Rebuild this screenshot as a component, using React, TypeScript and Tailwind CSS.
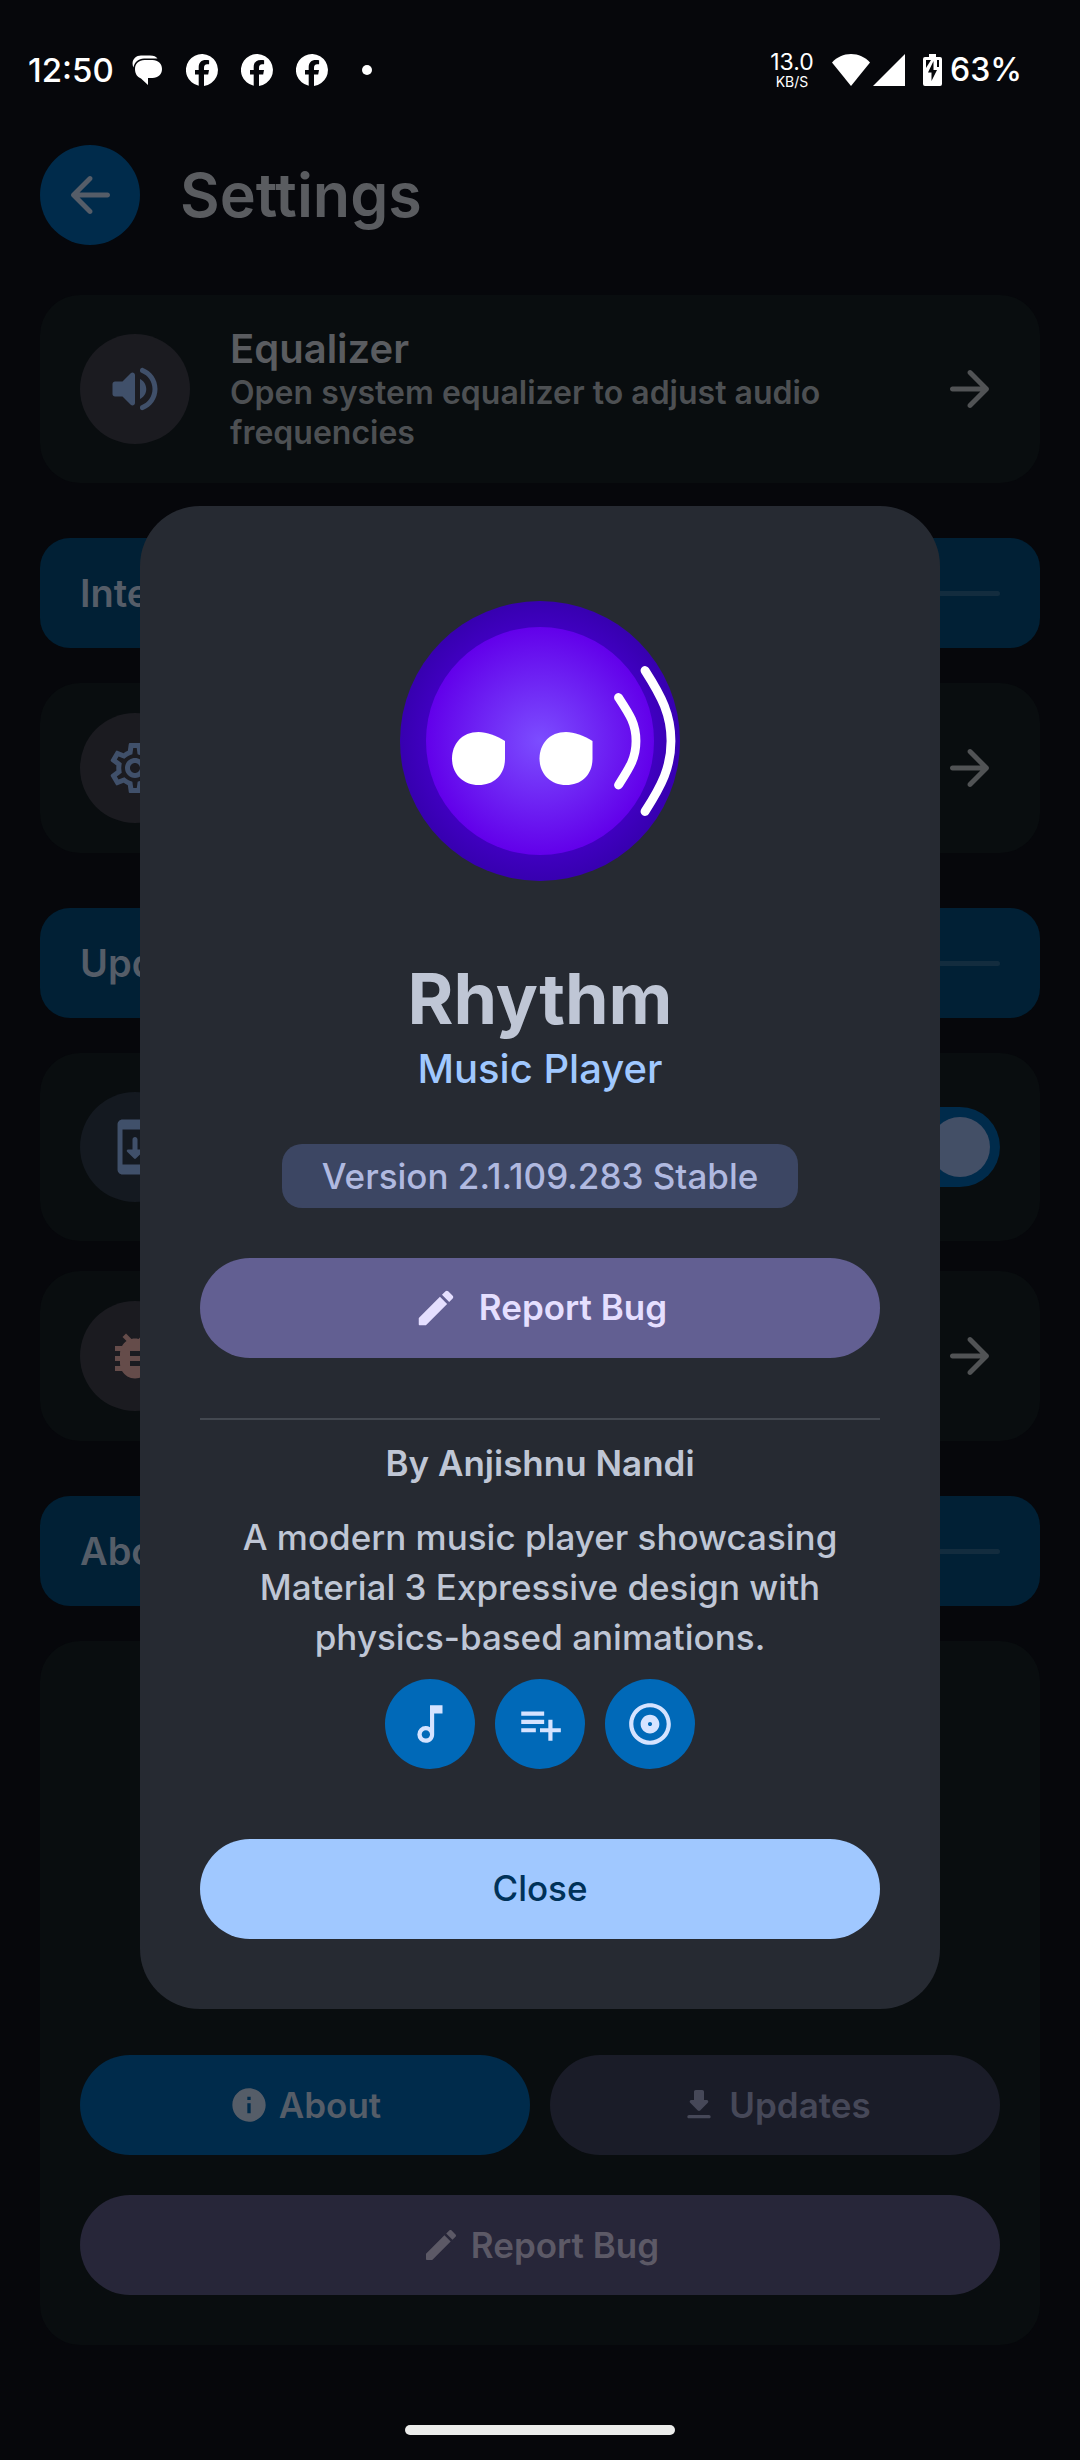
import type { ReactNode } from "react";
import {
  MdBugReport,
  MdInfo,
  MdOutlineAlbum,
  MdOutlineMusicNote,
  MdOutlineSettings,
  MdPlaylistAdd,
} from "react-icons/md";

const PATHS = {
  back: "M19 11H7.83l4.88-4.88c.39-.39.39-1.03 0-1.42-.39-.39-1.02-.39-1.41 0l-6.59 6.59c-.39.39-.39 1.02 0 1.41l6.59 6.59c.39.39 1.02.39 1.41 0 .39-.39.39-1.02 0-1.41L7.83 13H19c.55 0 1-.45 1-1s-.45-1-1-1z",
  forward:
    "M5 13h11.17l-4.88 4.88c-.39.39-.39 1.03 0 1.42.39.39 1.02.39 1.41 0l6.59-6.59c.39-.39.39-1.02 0-1.41l-6.58-6.6c-.39-.39-1.02-.39-1.41 0-.39.39-.39 1.02 0 1.41L16.17 11H5c-.55 0-1 .45-1 1s.45 1 1 1z",
  volume:
    "M3 10v4c0 .55.45 1 1 1h3l3.29 3.29c.63.63 1.71.18 1.71-.71V6.41c0-.89-1.08-1.34-1.71-.71L7 9H4c-.55 0-1 .45-1 1zm13.5 2c0-1.77-1.02-3.29-2.5-4.03v8.05c1.48-.73 2.5-2.25 2.5-4.02zM14 4.45v.2c0 .38.25.71.6.85C17.18 6.53 19 9.06 19 12s-1.82 5.47-4.4 6.5c-.36.14-.6.47-.6.85v.2c0 .63.63 1.07 1.21.85C18.6 19.11 21 15.84 21 12s-2.4-7.11-5.79-8.4c-.58-.23-1.21.22-1.21.85z",
  update:
    "M17 1.01L7 1c-1.1 0-1.99.9-1.99 2v18c0 1.1.89 2 1.99 2h10c1.1 0 2-.9 2-2V3c0-1.1-.9-1.99-2-1.99zM17 19H7V5h10v14zM11 9v4H9.2c-.45 0-.67.54-.35.85l2.79 2.79c.2.2.51.2.71 0l2.79-2.79c.31-.31.09-.85-.36-.85H13V9c0-.55-.45-1-1-1s-1 .45-1 1z",
  download:
    "M16.59 9H15V4c0-.55-.45-1-1-1h-4c-.55 0-1 .45-1 1v5H7.41c-.89 0-1.34 1.08-.71 1.71l4.59 4.59c.39.39 1.02.39 1.41 0l4.59-4.59c.63-.63.19-1.71-.7-1.71zM5 19c0 .55.45 1 1 1h12c.55 0 1-.45 1-1s-.45-1-1-1H6c-.55 0-1 .45-1 1z",
  edit: "M3 17.46v3.04c0 .28.22.5.5.5h3.04c.13 0 .26-.05.35-.15L17.81 9.94l-3.75-3.75L3.15 17.1c-.1.1-.15.22-.15.36zM20.71 7.04c.39-.39.39-1.02 0-1.41l-2.34-2.34c-.39-.39-1.02-.39-1.41 0l-1.83 1.83 3.75 3.75 1.83-1.83z",
};

function Glyph({ name, className }: { name: keyof typeof PATHS; className: string }) {
  return (
    <svg viewBox="0 0 24 24" fill="currentColor" aria-hidden="true" className={className}>
      <path fillRule="evenodd" d={PATHS[name]} />
    </svg>
  );
}

function FacebookMark() {
  return (
    <svg viewBox="0 0 32 32" className="size-8" aria-hidden="true">
      <path
        fill="#fff"
        d="M12.700 31.700A16 16 0 1 1 18 31.900V20.600h4.200l.8-4.500h-5v-2.200c0-2.400 1-3.600 3.200-3.600h1.900V6.200c-.8-.2-2-.3-3.200-.3-4.700 0-7.200 2.600-7.200 7.300v2.900H9v4.500h3.700z"
      />
    </svg>
  );
}

function StatusBar() {
  return (
    <div className="flex h-[140px] items-center justify-between pl-7 pr-[58px] text-white">
      <div className="flex items-center">
        <span className="w-[104px] text-[33px] font-medium leading-10">12:50</span>
        <svg viewBox="0 0 30 30" className="size-[30px]" aria-hidden="true">
          <path fill="#fff" d="M1.500 12.500C-1.500 6 3 .5 9 .5h9c4 0 6 1 7.500 3H12C6.500 3.500 2.500 7 1.500 12.500z" />
          <path fill="#fff" d="M12.500 5h8C26 5 30 8.500 30 14s-4 9-9.500 9H16v7l-7-6.500C5 22 3 18.500 3 14c0-5.500 4-9 9.500-9z" />
        </svg>
        <div className="ml-6 flex gap-[23px]">
          <FacebookMark />
          <FacebookMark />
          <FacebookMark />
        </div>
        <span className="ml-[34px] size-2.5 rounded-full bg-white" />
      </div>
      <div className="flex items-center">
        <div className="flex w-11 flex-col items-center">
          <span className="text-[23px] leading-6">13.0</span>
          <span className="text-[14px] leading-4">KB/S</span>
        </div>
        <svg viewBox="0 0 38 32" className="ml-[18px] h-8 w-[38px]" aria-hidden="true">
          <path fill="#fff" d="M19 0c7.500 0 14 3 19 8.500L19 32 0 8.500C5 3 11.500 0 19 0z" />
        </svg>
        <svg viewBox="0 0 32 32" className="ml-[3px] size-8" aria-hidden="true">
          <path fill="#fff" d="M32 0v32H0z" />
        </svg>
        <svg viewBox="0 0 19 32" className="ml-[18px] h-8 w-[19px]" aria-hidden="true">
          <path fill="#fff" d="M6 0h7v3h4a2 2 0 0 1 2 2v25a2 2 0 0 1-2 2H2a2 2 0 0 1-2-2V5a2 2 0 0 1 2-2h4z" />
          <path fill="#06070b" d="M3 6h5L3 14zM14 6h2v7h-2zM10.500 7v9H14L8.500 27v-8.500H5z" />
        </svg>
        <span className="ml-2 text-[32px] font-medium leading-10">63%</span>
      </div>
    </div>
  );
}

function SectionHeader({ title }: { title: string }) {
  return (
    <div className="mt-[55px] flex h-[110px] items-center gap-10 rounded-[30px] bg-[#012035] px-10">
      <h2 className="text-[38px] font-semibold text-[#555d68]">{title}</h2>
      <span className="h-[5px] flex-1 rounded-full bg-[#132c3e]" />
    </div>
  );
}

function IconCircle({ className, children }: { className: string; children: ReactNode }) {
  return (
    <span className={"flex size-[110px] shrink-0 items-center justify-center rounded-full " + className}>
      {children}
    </span>
  );
}

function Row({ className, children }: { className: string; children: ReactNode }) {
  return (
    <div className={"flex items-center justify-between rounded-[40px] bg-[#090d0f] px-10 py-[30px] " + className}>
      {children}
    </div>
  );
}

function ForwardButton({ label }: { label: string }) {
  return (
    <button type="button" aria-label={label} className="text-[#515355]">
      <Glyph name="forward" className="size-[60px]" />
    </button>
  );
}

function Logo() {
  return (
    <svg viewBox="0 0 280 280" className="size-[280px]" role="img" aria-label="Rhythm logo">
      <defs>
        <radialGradient id="logo-rim">
          <stop offset="0.8" stopColor="#4000c1" />
          <stop offset="1" stopColor="#3700b0" />
        </radialGradient>
        <radialGradient id="logo-face">
          <stop offset="0" stopColor="#7c4dff" />
          <stop offset="1" stopColor="#6200ea" />
        </radialGradient>
      </defs>
      <circle cx="140" cy="140" r="140" fill="url(#logo-rim)" />
      <circle cx="140" cy="140" r="114" fill="url(#logo-face)" />
      <g fill="#fff">
        <path d="M105 140V157.500C105 173 95 184 78.500 184S52 172 52 157.500 62 131 78.500 131C87 131 96 134.500 105 140Z" />
        <path d="M192.500 140V157.500C192.500 173 182.500 184 166 184S139.500 172 139.500 157.500 149.500 131 166 131C174.500 131 183.500 134.500 192.500 140Z" />
      </g>
      <g fill="none" stroke="#fff" strokeWidth="8.800" strokeLinecap="round">
        <path d="M218.500 96.500C230 114 236 123 236 140S230 166 218.500 184" />
        <path d="M245 69.500C262 96 271 114 271 140S262 184 245 210.500" />
      </g>
    </svg>
  );
}

function AboutDialog() {
  return (
    <div className="absolute inset-0 flex items-center justify-center px-[140px] pt-[54px]">
      <div
        role="dialog"
        aria-modal="true"
        aria-labelledby="about-title"
        className="flex w-full max-w-[800px] flex-col items-center rounded-[60px] bg-[#262a32] px-[60px] pb-[70px] pt-[95px] text-[#bfc6d5]"
      >
        <Logo />
        <h1 id="about-title" className="mt-[78px] text-[70px] font-bold leading-[80px]">
          Rhythm
        </h1>
        <p className="text-[40px] font-medium leading-[60px] text-[#a0c8ff]">Music Player</p>
        <p className="mt-[45px] rounded-[20px] bg-[#3c4663] px-10 text-[35px] font-medium leading-[64px] text-[#b0b9e0]">
          Version 2.1.109.283 Stable
        </p>
        <button
          type="button"
          className="mt-[50px] flex h-[100px] w-full items-center justify-center gap-5 rounded-full bg-[#625f92] text-[35px] font-semibold text-[#e5dfff]"
        >
          <Glyph name="edit" className="size-[46px]" />
          Report Bug
        </button>
        <hr className="mt-[60px] w-full border-t-2 border-[#434850]" />
        <p className="mt-[18px] text-[35px] font-semibold leading-[50px]">By Anjishnu Nandi</p>
        <p className="mt-6 text-center text-[35px] font-medium leading-[50px]">
          A modern music player showcasing Material 3 Expressive design with physics-based animations.
        </p>
        <div className="mt-[17px] flex gap-5 text-[50px] text-[#d5e3ff]">
          <span className="flex size-[90px] items-center justify-center rounded-full bg-[#0069b8]">
            <MdOutlineMusicNote />
          </span>
          <span className="flex size-[90px] items-center justify-center rounded-full bg-[#0069b8]">
            <MdPlaylistAdd />
          </span>
          <span className="flex size-[90px] items-center justify-center rounded-full bg-[#0069b8]">
            <MdOutlineAlbum />
          </span>
        </div>
        <button
          type="button"
          className="mt-[70px] h-[100px] w-full rounded-full bg-[#a0c8ff] text-[35px] font-medium text-[#003259]"
        >
          Close
        </button>
      </div>
    </div>
  );
}

export default function App() {
  return (
    <div className="relative flex min-h-screen flex-col bg-[#06070b] font-['Inter',sans-serif]">
      <StatusBar />
      <main className="px-10 pt-[5px]">
        <header className="flex items-center gap-10">
          <button
            type="button"
            aria-label="Back"
            className="flex size-[100px] items-center justify-center rounded-full bg-[#002b4b] text-[#555d68]"
          >
            <Glyph name="back" className="size-[60px]" />
          </button>
          <h1 className="text-[61px] font-semibold leading-[80px] text-[#5a5c60]">Settings</h1>
        </header>

        <Row className="mt-[50px]">
          <IconCircle className="bg-[#1b1b20] text-[#40506a]">
            <Glyph name="volume" className="size-[60px]" />
          </IconCircle>
          <div className="ml-10 flex-1 pr-[100px]">
            <h3 className="text-[40px] font-semibold leading-[48px] text-[#5a5c60]">Equalizer</h3>
            <p className="text-[32px] font-semibold leading-10 text-[#4d5053]">
              Open system equalizer to adjust audio frequencies
            </p>
          </div>
          <ForwardButton label="Open equalizer" />
        </Row>

        <SectionHeader title="Interface" />
        <Row className="mt-[35px]">
          <IconCircle className="bg-[#1b1b20] text-[60px] text-[#40506a]">
            <MdOutlineSettings />
          </IconCircle>
          <ForwardButton label="Open interface settings" />
        </Row>

        <SectionHeader title="Updates" />
        <Row className="mt-[35px] min-h-[188px]">
          <IconCircle className="bg-[#141920] text-[#40506a]">
            <Glyph name="update" className="size-[60px]" />
          </IconCircle>
          <input
            type="checkbox"
            role="switch"
            aria-label="Automatic updates"
            defaultChecked
            className="flex h-20 w-[130px] appearance-none items-center justify-end rounded-full bg-[#002b4b] p-2.5 before:size-[60px] before:rounded-full before:bg-[#434f66]"
          />
        </Row>
        <Row className="mt-[30px]">
          <IconCircle className="bg-[#1b1b20] text-[60px] text-[#654c4a]">
            <MdBugReport />
          </IconCircle>
          <ForwardButton label="Report a bug" />
        </Row>

        <SectionHeader title="About" />
        <div className="mt-[35px] flex min-h-[704px] flex-col justify-end gap-10 rounded-[40px] bg-[#090d0f] px-10 pb-[50px] text-[35px] font-semibold">
          <div className="grid grid-cols-2 gap-5">
            <button
              type="button"
              className="flex h-[100px] items-center justify-center gap-2.5 rounded-full bg-[#002b4b] text-[#555d68]"
            >
              <MdInfo className="size-10" />
              About
            </button>
            <button
              type="button"
              className="flex h-[100px] items-center justify-center gap-2.5 rounded-full bg-[#1a1c28] text-[#464858]"
            >
              <Glyph name="download" className="size-10" />
              Updates
            </button>
          </div>
          <button
            type="button"
            className="flex h-[100px] items-center justify-center gap-2.5 rounded-full bg-[#272639] text-[#5c5966]"
          >
            <Glyph name="edit" className="size-10" />
            Report Bug
          </button>
        </div>
      </main>
      <div className="mt-20 flex justify-center pb-6">
        <span className="h-2.5 w-[270px] rounded-full bg-[#ebeceb]" />
      </div>
      <AboutDialog />
    </div>
  );
}
